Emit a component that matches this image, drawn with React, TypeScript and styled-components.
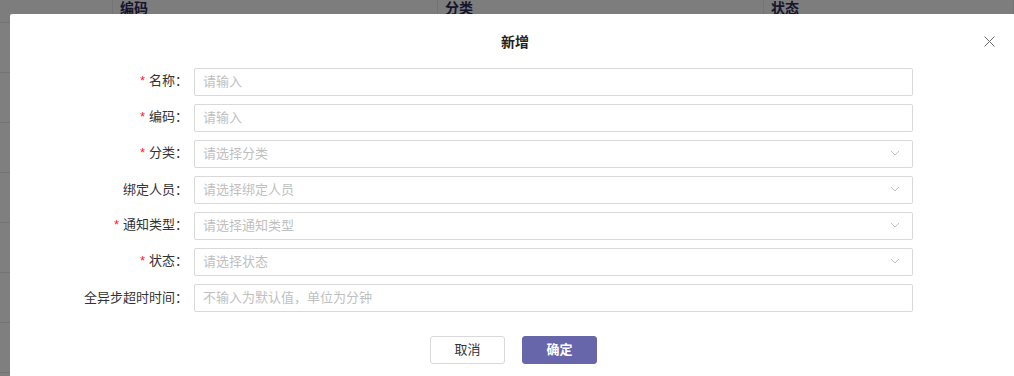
import React from "react";
import styled, { createGlobalStyle } from "styled-components";

const GlobalStyle = createGlobalStyle`
    html, body {
        margin: 0;
        padding: 0;
        width: 1014px;
        height: 376px;
        overflow: hidden;
        background: #ffffff;
        font-family: "Noto Sans CJK SC", "Noto Sans", sans-serif;
    }
`;

const Page = styled.div`
    position: relative;
    width: 1014px;
    height: 376px;
    overflow: hidden;
`;

const BgTable = styled.div`
    display: flex;
    flex-direction: column;
    margin-top: -28px;
`;

const BgRow = styled.div<{ $head?: boolean }>`
    display: grid;
    grid-template-columns: 113px 325px 326px 1fr;
    height: ${(p) => (p.$head ? "50px" : "49px")};
    border-bottom: 1px solid #e8e8e8;
    background: ${(p) => (p.$head ? "#fafafa" : "#ffffff")};
`;

const BgCell = styled.div`
    border-right: 1px solid #e8e8e8;
    padding: 25px 7px 0;
    font-size: 14px;
    font-weight: 700;
    color: #2a2a5a;
    line-height: 20px;
`;

const Mask = styled.div`
    position: absolute;
    inset: 0;
    background: rgba(0, 0, 0, 0.5);
`;

const Modal = styled.div`
    position: absolute;
    left: 10px;
    top: 14px;
    width: 1010px;
    height: 380px;
    background: #ffffff;
    border-radius: 2px;
    display: flex;
    flex-direction: column;
`;

const Header = styled.div`
    position: relative;
    height: 54px;
    display: flex;
    align-items: center;
    justify-content: center;
    font-size: 14px;
    font-weight: 700;
    color: #222222;
    box-sizing: border-box;
    padding-bottom: 1px;
`;

const Close = styled.button`
    position: absolute;
    right: 24px;
    top: 20px;
    width: 14px;
    height: 14px;
    padding: 0;
    border: 0;
    background: none;
    display: flex;
    align-items: center;
    justify-content: center;
`;

const Form = styled.div`
    display: flex;
    flex-direction: column;
    gap: 8px;
`;

const Row = styled.div`
    display: grid;
    grid-template-columns: 184px 719px;
    align-items: center;
`;

const Label = styled.label`
    text-align: right;
    padding-right: 6px;
    padding-bottom: 3px;
    font-size: 13px;
    line-height: 18px;
    color: #333333;
    white-space: nowrap;
`;

const Star = styled.span`
    color: #f5222d;
    margin-right: 4px;
    font-family: "Liberation Sans", sans-serif;
    font-size: 13px;
`;

const Field = styled.div`
    height: 28px;
    box-sizing: border-box;
    border: 1px solid #d9d9d9;
    border-radius: 2px;
    display: flex;
    align-items: center;
    justify-content: space-between;
    padding: 0 12px 2px 8px;
    font-size: 13px;
    line-height: 18px;
    color: #bfbfbf;
`;

const Footer = styled.div`
    display: flex;
    justify-content: center;
    gap: 17px;
    margin-top: 24px;
    padding-right: 3px;
`;

const Btn = styled.button<{ $primary?: boolean }>`
    width: 75px;
    height: 28px;
    box-sizing: border-box;
    border-radius: 3px;
    font-family: "Noto Sans CJK SC", sans-serif;
    font-size: 13px;
    line-height: 18px;
    padding: 0 0 2px;
    font-weight: ${(p) => (p.$primary ? 700 : 400)};
    border: 1px solid ${(p) => (p.$primary ? "#6866ab" : "#d9d9d9")};
    background: ${(p) => (p.$primary ? "#6866ab" : "#ffffff")};
    color: ${(p) => (p.$primary ? "#ffffff" : "#333333")};
`;

const Chevron = () => (
    <svg width="10" height="6" viewBox="0 0 10 6" fill="none">
        <path d="M1 1l4 4 4-4" stroke="#c4c4c4" strokeWidth="1" />
    </svg>
);

const fields = [
    { label: "名称", required: true, placeholder: "请输入" },
    { label: "编码", required: true, placeholder: "请输入" },
    { label: "分类", required: true, placeholder: "请选择分类", select: true },
    { label: "绑定人员", required: false, placeholder: "请选择绑定人员", select: true },
    { label: "通知类型", required: true, placeholder: "请选择通知类型", select: true },
    { label: "状态", required: true, placeholder: "请选择状态", select: true },
    { label: "全异步超时时间", required: false, placeholder: "不输入为默认值，单位为分钟" },
];

export default function App() {
    return (
        <Page>
            <GlobalStyle />
            <BgTable>
                <BgRow $head>
                    <BgCell />
                    <BgCell>编码</BgCell>
                    <BgCell>分类</BgCell>
                    <BgCell>状态</BgCell>
                </BgRow>
                {[0, 1, 2, 3, 4, 5, 6, 7].map((i) => (
                    <BgRow key={i}>
                        <BgCell />
                        <BgCell />
                        <BgCell />
                        <BgCell />
                    </BgRow>
                ))}
            </BgTable>
            <Mask />
            <Modal>
                <Header>
                    新增
                    <Close aria-label="close">
                        <svg width="11" height="11" viewBox="0 0 11 11">
                            <path d="M0.5 0.5l10 10M10.5 0.5l-10 10" stroke="#666" strokeWidth="1" />
                        </svg>
                    </Close>
                </Header>
                <Form>
                    {fields.map((f) => (
                        <Row key={f.label}>
                            <Label>
                                {f.required && <Star>*</Star>}
                                {f.label}：
                            </Label>
                            <Field>
                                <span>{f.placeholder}</span>
                                {f.select && <Chevron />}
                            </Field>
                        </Row>
                    ))}
                </Form>
                <Footer>
                    <Btn>取消</Btn>
                    <Btn $primary>确定</Btn>
                </Footer>
            </Modal>
        </Page>
    );
}
